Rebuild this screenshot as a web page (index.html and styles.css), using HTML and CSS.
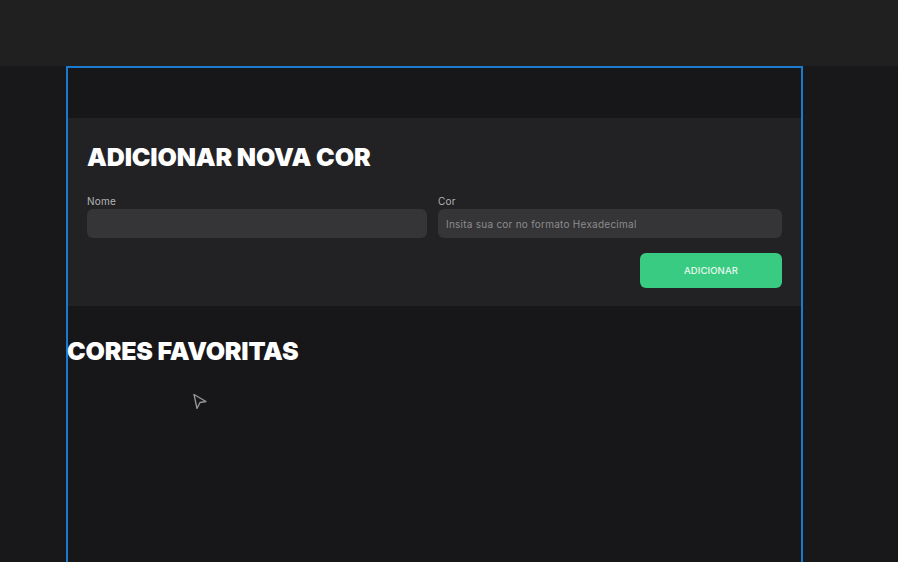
FILE: index.html
```html
<!DOCTYPE html>
<html lang="pt-BR">
<head>
<meta charset="utf-8">
<title>Cores</title>
<link rel="stylesheet" href="styles.css">
</head>
<body>
<header class="topbar"></header>
<main class="frame">
  <section class="card">
    <h1 class="title">ADICIONAR NOVA COR</h1>
    <form class="form">
      <div class="fields">
        <label class="field">
          <span class="label">Nome</span>
          <input class="input" type="text">
        </label>
        <label class="field">
          <span class="label">Cor</span>
          <input class="input" type="text" placeholder="Insita sua cor no formato Hexadecimal">
        </label>
      </div>
      <div class="actions">
        <button class="btn" type="button">ADICIONAR</button>
      </div>
    </form>
  </section>
  <h2 class="subtitle">CORES FAVORITAS</h2>
</main>
<svg class="cursor" width="16" height="18" viewBox="0 0 16 18">
  <path d="M2 1.5 L14 8.5 L8 9.5 L5 15.5 Z" fill="#18171a" stroke="#9a9a9a" stroke-width="1.3" stroke-linejoin="round"/>
</svg>
</body>
</html>
```

FILE: styles.css
```css
* { box-sizing: border-box; }
html, body { margin: 0; padding: 0; }
body {
  background: #18171a;
  font-family: "Inter", "Noto Sans", sans-serif;
  color: #fff;
  height: 562px;
  overflow: hidden;
  position: relative;
}
.topbar {
  height: 66px;
  background: #202020;
}
.frame {
  margin-left: 66px;
  width: 737px;
  height: 496px;
  border: 2px solid #1a7ad0;
  border-bottom: none;
  padding-top: 50px;
  background: #171619;
}
.card {
  background: #222224;
  height: 188px;
  padding: 24px 19px 0 19px;
}
.title {
  margin: 0;
  font-size: 25px;
  font-weight: 900;
  letter-spacing: -0.15px;
  line-height: 30px;
}
.form { margin-top: 23px; }
.fields {
  display: grid;
  grid-template-columns: 340px 1fr;
  gap: 11px;
}
.field {
  display: flex;
  flex-direction: column;
}
.label {
  font-size: 10px;
  color: #b4b4b4;
  line-height: 12px;
  margin-bottom: 2px;
  letter-spacing: 0.2px;
}
.input {
  height: 29px;
  border: none;
  border-radius: 6px;
  background: #353537;
  padding: 0 8px;
  font-family: inherit;
  font-size: 10px;
  letter-spacing: 0.25px;
  color: #ddd;
  outline: none;
}
.input::placeholder { color: #8c8c8e; }
.actions {
  display: flex;
  justify-content: flex-end;
  margin-top: 15px;
}
.btn {
  width: 142px;
  height: 35px;
  border: none;
  border-radius: 6px;
  background: #38cb81;
  color: #e9f7ef;
  font-family: inherit;
  font-size: 9.5px;
  font-weight: 500;
  letter-spacing: 0.1px;
}
.subtitle {
  margin: 30px 0 0 -1px;
  font-size: 25px;
  font-weight: 900;
  letter-spacing: -0.2px;
  line-height: 30px;
}
.cursor {
  position: absolute;
  left: 192px;
  top: 393px;
}
```
